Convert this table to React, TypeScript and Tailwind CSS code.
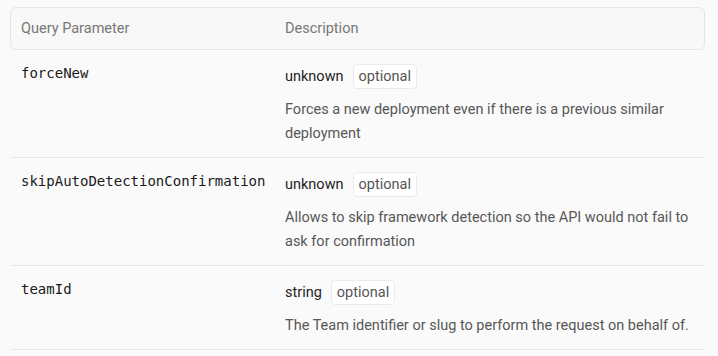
const params = [
  {
    name: "forceNew",
    type: "unknown",
    description:
      "Forces a new deployment even if there is a previous similar deployment",
  },
  {
    name: "skipAutoDetectionConfirmation",
    type: "unknown",
    description:
      "Allows to skip framework detection so the API would not fail to ask for confirmation",
  },
  {
    name: "teamId",
    type: "string",
    description: "The Team identifier or slug to perform the request on behalf of.",
  },
];

export default function App() {
  return (
    <div
      className="min-h-screen bg-[#fafafa] pl-[10px] pr-[13px] pt-[7px]"
      style={{ fontFamily: "Roboto, 'Liberation Sans', sans-serif" }}
    >
      {/* HEADER */}
      <div className="flex h-[43px] items-center rounded-md border border-[#e6e6e6] bg-[#f8f8f8] text-[14.5px] text-[#777]">
        <div className="w-[274px] shrink-0 pl-[10px]">Query Parameter</div>
        <div>Description</div>
      </div>

      {/* ROWS */}
      {params.map((p) => (
        <div
          key={p.name}
          className="flex border-b border-[#e8e8e8] pt-[14px] pb-[11px]"
        >
          <div
            className="-mt-px w-[275px] shrink-0 pl-[11px] text-[14px] leading-5 text-[#1a1a1a]"
            style={{ fontFamily: "'DejaVu Sans Mono', monospace" }}
          >
            {p.name}
          </div>
          <div className="min-w-0 flex-1">
            <div className="flex items-center gap-[9px]">
              <span className="text-[14.5px] text-[#1f1f1f]">{p.type}</span>
              <span className="flex h-[25px] items-center rounded border border-[#ebebeb] bg-white px-[5px] text-[14.5px] text-[#555]">
                optional
              </span>
            </div>
            <p className="mt-[9px] text-[14.5px] leading-6 text-[#575757]">
              {p.description}
            </p>
          </div>
        </div>
      ))}
    </div>
  );
}
